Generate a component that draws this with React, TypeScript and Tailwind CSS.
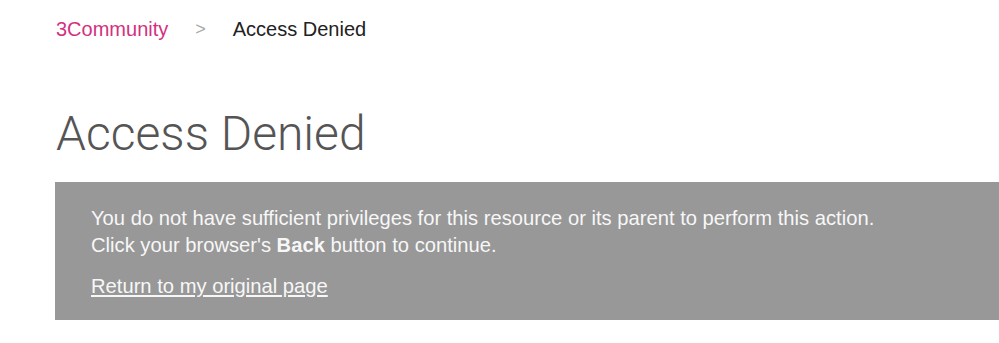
import React from "react";

export default function App() {
  return (
    <div className="min-h-[343px] bg-white pt-[16px] pl-[55px] font-['Liberation_Sans',Arial,sans-serif] overflow-hidden">

      {/* BREADCRUMB */}
      <nav className="flex items-center pl-[1px] text-[20px] leading-[27px]">
        <a href="#" className="text-[#d3307f]">3Community</a>
        <span className="mx-[27px] text-[18px] text-[#a8a8a8]">&gt;</span>
        <span className="text-[#222222]">Access Denied</span>
      </nav>

      {/* TITLE */}
      <h1 className="mt-[63px] pl-[1px] font-['Roboto',sans-serif] text-[48px] leading-[55px] font-light text-[#555555]">
        Access Denied
      </h1>

      {/* MESSAGE BOX */}
      <div className="mt-[21px] w-full bg-[#989898] pt-[23px] pb-[20px] pl-[36px] text-[20.2px] leading-[27px] text-[#f7f7f7]">
        <p>
          You do not have sufficient privileges for this resource or its parent to perform this action.
          <br />
          Click your browser's <b className="font-bold">Back</b> button to continue.
        </p>
        <p className="mt-[14px]">
          <a href="#" className="underline underline-offset-2">Return to my original page</a>
        </p>
      </div>
    </div>
  );
}
